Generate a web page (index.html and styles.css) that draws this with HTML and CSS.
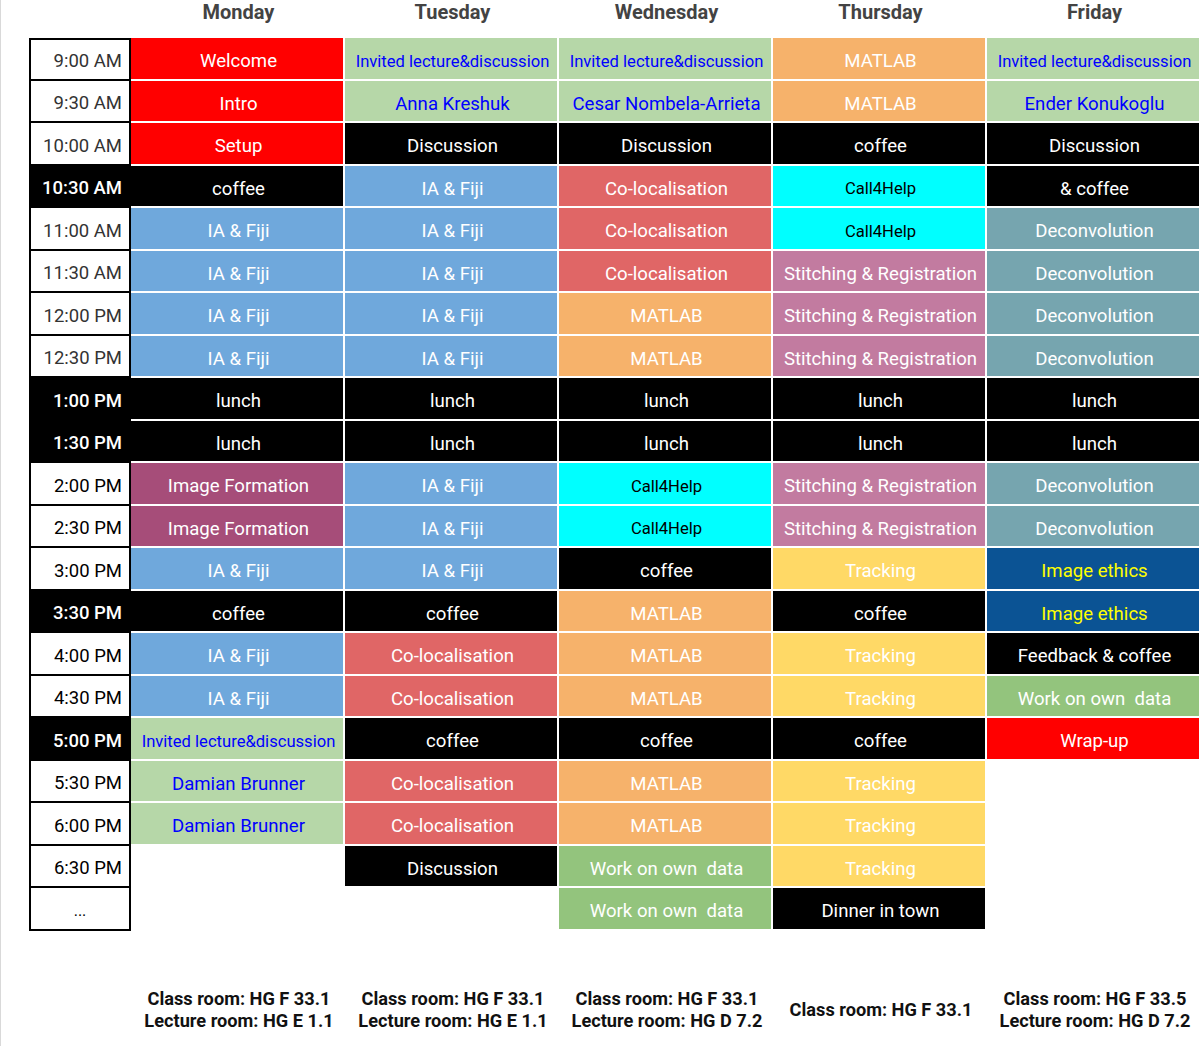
FILE: index.html
```html
<!DOCTYPE html>
<html>
<head>
<meta charset="utf-8">
<link rel="stylesheet" href="styles.css">
</head>
<body>
<div class="page">
  <div class="head">
    <div></div>
    <div class="day">Monday</div>
    <div class="day">Tuesday</div>
    <div class="day">Wednesday</div>
    <div class="day">Thursday</div>
    <div class="day">Friday</div>
  </div>

  <div class="grid">
    <div class="t first">9:00 AM</div>
    <div class="c red">Welcome</div>
    <div class="c lg sm">Invited lecture&amp;discussion</div>
    <div class="c lg sm">Invited lecture&amp;discussion</div>
    <div class="c or">MATLAB</div>
    <div class="c lg sm">Invited lecture&amp;discussion</div>

    <div class="t">9:30 AM</div>
    <div class="c red">Intro</div>
    <div class="c lg">Anna Kreshuk</div>
    <div class="c lg">Cesar Nombela-Arrieta</div>
    <div class="c or">MATLAB</div>
    <div class="c lg">Ender Konukoglu</div>

    <div class="t">10:00 AM</div>
    <div class="c red">Setup</div>
    <div class="c bk">Discussion</div>
    <div class="c bk">Discussion</div>
    <div class="c bk">coffee</div>
    <div class="c bk">Discussion</div>

    <div class="t dark">10:30 AM</div>
    <div class="c bk">coffee</div>
    <div class="c bl">IA &amp; Fiji</div>
    <div class="c co">Co-localisation</div>
    <div class="c cy">Call4Help</div>
    <div class="c bk">&amp; coffee</div>

    <div class="t">11:00 AM</div>
    <div class="c bl">IA &amp; Fiji</div>
    <div class="c bl">IA &amp; Fiji</div>
    <div class="c co">Co-localisation</div>
    <div class="c cy">Call4Help</div>
    <div class="c dc">Deconvolution</div>

    <div class="t">11:30 AM</div>
    <div class="c bl">IA &amp; Fiji</div>
    <div class="c bl">IA &amp; Fiji</div>
    <div class="c co">Co-localisation</div>
    <div class="c st">Stitching &amp; Registration</div>
    <div class="c dc">Deconvolution</div>

    <div class="t">12:00 PM</div>
    <div class="c bl">IA &amp; Fiji</div>
    <div class="c bl">IA &amp; Fiji</div>
    <div class="c or">MATLAB</div>
    <div class="c st">Stitching &amp; Registration</div>
    <div class="c dc">Deconvolution</div>

    <div class="t">12:30 PM</div>
    <div class="c bl">IA &amp; Fiji</div>
    <div class="c bl">IA &amp; Fiji</div>
    <div class="c or">MATLAB</div>
    <div class="c st">Stitching &amp; Registration</div>
    <div class="c dc">Deconvolution</div>

    <div class="t dark">1:00 PM</div>
    <div class="c bk">lunch</div>
    <div class="c bk">lunch</div>
    <div class="c bk">lunch</div>
    <div class="c bk">lunch</div>
    <div class="c bk">lunch</div>

    <div class="t dark">1:30 PM</div>
    <div class="c bk">lunch</div>
    <div class="c bk">lunch</div>
    <div class="c bk">lunch</div>
    <div class="c bk">lunch</div>
    <div class="c bk">lunch</div>

    <div class="t blk">2:00 PM</div>
    <div class="c pu">Image Formation</div>
    <div class="c bl">IA &amp; Fiji</div>
    <div class="c cy">Call4Help</div>
    <div class="c st">Stitching &amp; Registration</div>
    <div class="c dc">Deconvolution</div>

    <div class="t blk">2:30 PM</div>
    <div class="c pu">Image Formation</div>
    <div class="c bl">IA &amp; Fiji</div>
    <div class="c cy">Call4Help</div>
    <div class="c st">Stitching &amp; Registration</div>
    <div class="c dc">Deconvolution</div>

    <div class="t blk">3:00 PM</div>
    <div class="c bl">IA &amp; Fiji</div>
    <div class="c bl">IA &amp; Fiji</div>
    <div class="c bk">coffee</div>
    <div class="c ye">Tracking</div>
    <div class="c eth">Image ethics</div>

    <div class="t dark">3:30 PM</div>
    <div class="c bk">coffee</div>
    <div class="c bk">coffee</div>
    <div class="c or">MATLAB</div>
    <div class="c bk">coffee</div>
    <div class="c eth">Image ethics</div>

    <div class="t blk">4:00 PM</div>
    <div class="c bl">IA &amp; Fiji</div>
    <div class="c co">Co-localisation</div>
    <div class="c or">MATLAB</div>
    <div class="c ye">Tracking</div>
    <div class="c bk">Feedback &amp; coffee</div>

    <div class="t blk">4:30 PM</div>
    <div class="c bl">IA &amp; Fiji</div>
    <div class="c co">Co-localisation</div>
    <div class="c or">MATLAB</div>
    <div class="c ye">Tracking</div>
    <div class="c gr">Work on own&nbsp; data</div>

    <div class="t dark">5:00 PM</div>
    <div class="c lg sm">Invited lecture&amp;discussion</div>
    <div class="c bk">coffee</div>
    <div class="c bk">coffee</div>
    <div class="c bk">coffee</div>
    <div class="c red">Wrap-up</div>

    <div class="t blk">5:30 PM</div>
    <div class="c lg">Damian Brunner</div>
    <div class="c co">Co-localisation</div>
    <div class="c or">MATLAB</div>
    <div class="c ye">Tracking</div>
    <div class="c"></div>

    <div class="t blk">6:00 PM</div>
    <div class="c lg">Damian Brunner</div>
    <div class="c co">Co-localisation</div>
    <div class="c or">MATLAB</div>
    <div class="c ye">Tracking</div>
    <div class="c"></div>

    <div class="t blk">6:30 PM</div>
    <div class="c"></div>
    <div class="c bk">Discussion</div>
    <div class="c gr">Work on own&nbsp; data</div>
    <div class="c ye">Tracking</div>
    <div class="c"></div>

    <div class="t dots">...</div>
    <div class="c"></div>
    <div class="c"></div>
    <div class="c gr">Work on own&nbsp; data</div>
    <div class="c bk">Dinner in town</div>
    <div class="c"></div>
  </div>

  <div class="foot">
    <div></div>
    <div class="room">Class room: HG F 33.1<br>Lecture room: HG E 1.1</div>
    <div class="room">Class room: HG F 33.1<br>Lecture room: HG E 1.1</div>
    <div class="room">Class room: HG F 33.1<br>Lecture room: HG D 7.2</div>
    <div class="room">Class room: HG F 33.1</div>
    <div class="room">Class room: HG F 33.5<br>Lecture room: HG D 7.2</div>
  </div>
</div>
</body>
</html>
```

FILE: styles.css
```css
html, body {
  margin: 0;
  padding: 0;
  background: #fff;
}
body {
  font-family: Roboto, "Liberation Sans", sans-serif;
  width: 1200px;
  height: 1046px;
  overflow: hidden;
}
.page {
  border-left: 1px solid #d9d9d9;
  padding-left: 28px;
  height: 1046px;
  box-sizing: border-box;
}
.head, .grid, .foot {
  display: grid;
  grid-template-columns: 102px repeat(5, 214px);
}
.head {
  height: 38px;
}
.day {
  font-size: 20px;
  line-height: 24px;
  font-weight: 700;
  color: #434343;
  text-align: center;
  padding-left: 1px;
}
.grid {
  grid-template-rows: repeat(21, 42.5px);
}
.t {
  box-sizing: border-box;
  border-left: 2px solid #000;
  border-right: 2px solid #000;
  border-bottom: 2px solid #000;
  display: flex;
  align-items: center;
  justify-content: flex-end;
  padding: 5px 7px 0 0;
  font-size: 18.5px;
  color: #333;
  background: #fff;
}
.t.first {
  border-top: 2px solid #000;
  padding-top: 3px;
}
.t.blk {
  color: #000;
}
.t.dark {
  background: #000;
  color: #fff;
  font-weight: 500;
}
.t.dots {
  justify-content: center;
  padding-right: 0;
  color: #000;
  font-size: 16px;
}
.c {
  box-sizing: border-box;
  border-right: 2px solid #fff;
  border-bottom: 2px solid #fff;
  display: flex;
  align-items: center;
  justify-content: center;
  padding-top: 6px;
  padding-left: 3px;
  font-size: 18.6px;
  color: #fff;
  white-space: nowrap;
}
.red { background: #ff0000; }
.lg { background: #b6d7a8; color: #0000ff; }
.c.sm { font-size: 16.6px; }
.or { background: #f6b26b; }
.bk { background: #000; }
.bl { background: #6fa8dc; }
.co { background: #e06666; }
.c.cy { background: #00ffff; color: #000; font-size: 16.6px; }
.dc { background: #76a5af; }
.st { background: #c27ba0; }
.pu { background: #a64d79; }
.ye { background: #ffd966; }
.eth { background: #0b5394; color: #ffff00; }
.gr { background: #93c47d; }
.foot {
  margin-top: 57px;
  grid-template-rows: 44px;
}
.room {
  display: flex;
  align-items: center;
  justify-content: center;
  text-align: center;
  font-size: 18.2px;
  line-height: 22px;
  font-weight: 700;
  color: #111;
  padding-left: 2px;
}
```
